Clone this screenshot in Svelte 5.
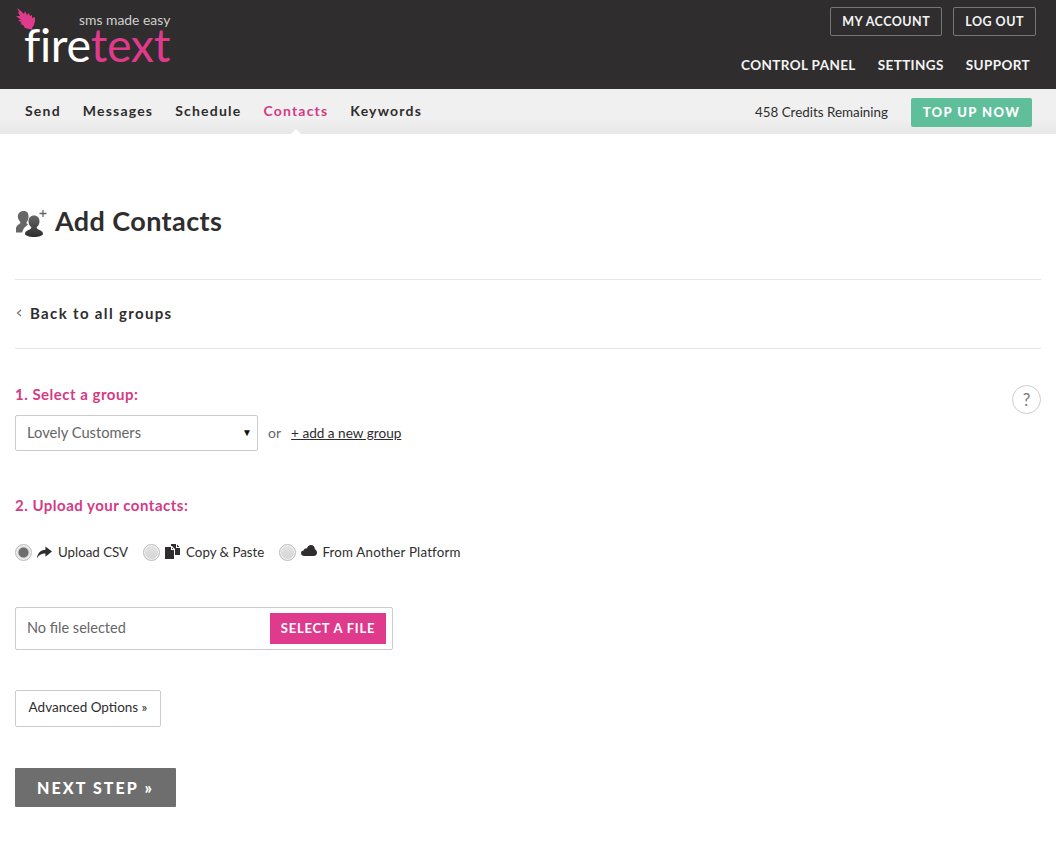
<script>
  const tabs = ['Send', 'Messages', 'Schedule', 'Contacts', 'Keywords'];
  const links = ['CONTROL PANEL', 'SETTINGS', 'SUPPORT'];
  let source = $state('csv');
  let group = $state('Lovely Customers');
</script>

<header class="top">
  <div class="logo">
    <svg class="flame" viewBox="0 0 20 23" width="20" height="23">
      <path d="M1 0 L5 3 L8 6 L9 3 L11 7 L13 5 L14 8 L16 7 L16 10 L19 9 L19 13 L18 17 L16 20 L17 22 L13 21 L9 20 L7 17 L4 16 L6 15 L2 12 L5 12 L0 8 L4 8 L2 4 L3 4 Z" fill="#df3a8b"/>
    </svg>
    <div class="tagline">sms made easy</div>
    <div class="wordmark">fire<span>text</span></div>
  </div>
  <div class="top-right">
    <div class="account">
      <a href="#account">MY ACCOUNT</a>
      <a href="#logout">LOG OUT</a>
    </div>
    <nav class="main-links">
      {#each links as link}
        <a href="#link">{link}</a>
      {/each}
    </nav>
  </div>
</header>

<div class="subnav">
  <nav class="tabs">
    {#each tabs as tab}
      <a href="#tab" class:active={tab === 'Contacts'}>{tab}</a>
    {/each}
  </nav>
  <div class="credits">
    <span>458 Credits Remaining</span>
    <a href="#topup" class="topup">TOP UP NOW</a>
  </div>
</div>

<main>
  <div class="title">
    <svg viewBox="0 0 32 28" width="32" height="28">
      <defs>
        <linearGradient id="person" x1="0" y1="0" x2="0" y2="1">
          <stop offset="0" stop-color="#666"/>
          <stop offset="1" stop-color="#2f2d2e"/>
        </linearGradient>
      </defs>
      <path d="M8.500 2c3.800 0 5.500 2.700 5 6.500-.3 2-1.200 4-2 5 0 1 .5 1.500 1.500 2l-4 3.500-2 4.500H1v-4c0-2.500 1.800-3.500 3.500-4.500 .7-.5 1-1 .8-2-1.300-1.500-2.500-3.500-2.500-5.500C2.800 4.500 5 2 8.500 2z" fill="#666"/>
      <path d="M19 6.500c3.500 0 5.500 2.500 5.500 6 0 2.300-1.200 4.300-2.700 5.600-.2 1.100.2 1.700 1.200 2.200 2.200 1 5 2 5 4.700 0 1.500-4 3-9 3s-9-1.500-9-3c0-2.700 2.800-3.700 5-4.700 1-.5 1.400-1.100 1.200-2.200-1.500-1.300-2.700-3.300-2.700-5.600 0-3.500 2-6 5.500-6z" fill="url(#person)"/>
      <path d="M28 1v7M24.500 4.500h7" stroke="#666" stroke-width="1.300" fill="none"/>
    </svg>
    <h1>Add Contacts</h1>
  </div>

  <div class="back">
    <svg viewBox="0 0 6 8" width="6" height="8"><path d="M5 1 1.500 4 5 7" fill="none" stroke="#777" stroke-width="1.200"/></svg>
    <a href="#back">Back to all groups</a>
  </div>

  <section class="form">
    <button class="help" type="button">?</button>

    <h2>1. Select a group:</h2>
    <div class="group-row">
      <div class="select">
        <select bind:value={group}>
          <option>Lovely Customers</option>
          <option>Staff</option>
        </select>
        <span class="caret">▼</span>
      </div>
      <span class="or">or</span>
      <a href="#new" class="add">+ add a new group</a>
    </div>

    <h2 class="second">2. Upload your contacts:</h2>
    <div class="sources">
      <label>
        <input type="radio" bind:group={source} value="csv" />
        <span class="radio"></span>
        <svg viewBox="0 0 16 13" width="15" height="13"><path d="M9 0l7 5.500L9 11V7.500C5.500 7.500 2.500 8.500 0 12.500 .5 7.500 3.500 3.800 9 3.500z" fill="#2f2d2e"/></svg>
        <span class="label-text">Upload CSV</span>
      </label>
      <label>
        <input type="radio" bind:group={source} value="paste" />
        <span class="radio"></span>
        <svg class="copy" viewBox="0 0 15 15" width="15" height="15"><path d="M0 3h6v3h3v9H0zM7 3.500 8.500 5H7zM6 0h5v4h4v7h-5V5L7 2H6zM12 .5 14.500 3H12z" fill="#2f2d2e"/></svg>
        <span class="label-text">Copy &amp; Paste</span>
      </label>
      <label class="platform">
        <input type="radio" bind:group={source} value="platform" />
        <span class="radio"></span>
        <svg class="cloud" viewBox="0 0 16 11" width="16" height="11"><path d="M3.500 11C1.300 11 0 9.800 0 8.200 0 6.700 1.200 5.700 2.600 5.600 3.200 3.800 4.500 3 6 3.200 6.800 1.200 8.300 0 10 0c2.300 0 3.800 1.800 3.900 4.300C15.200 5 16 6.200 16 7.700 16 9.700 14.500 11 12.500 11z" fill="#2f2d2e"/></svg>
        <span class="label-text">From Another Platform</span>
      </label>
    </div>

    <div class="file">
      <span>No file selected</span>
      <button type="button">SELECT A FILE</button>
    </div>

    <button class="advanced" type="button">Advanced Options »</button>

    <button class="next" type="button">NEXT STEP »</button>
  </section>
</main>

<style>
  :global(body) {
    margin: 0;
    background: #fff;
    color: #2f2d2e;
    font-family: Lato, 'Open Sans', sans-serif;
  }

  a {
    text-decoration: none;
    color: inherit;
  }

  .top {
    height: 89px;
    box-sizing: border-box;
    background: #2f2d2e;
    display: flex;
    justify-content: space-between;
    padding: 7px 20px 0 16px;
  }

  .logo {
    position: relative;
    width: 160px;
    height: 60px;
  }

  .flame {
    position: absolute;
    left: 0;
    top: 1px;
  }

  .tagline {
    position: absolute;
    left: 63px;
    top: 7px;
    font-size: 13.900px;
    line-height: 12px;
    font-weight: 400;
    color: #cfcfcf;
    white-space: nowrap;
  }

  .wordmark {
    position: absolute;
    left: 8px;
    top: 20px;
    font-size: 46.500px;
    line-height: 34px;
    font-weight: 400;
    letter-spacing: -0.3px;
    color: #fff;
    white-space: nowrap;
  }

  .wordmark span {
    color: #df3a8b;
  }

  .top-right {
    display: flex;
    flex-direction: column;
    align-items: flex-end;
  }

  .account {
    display: flex;
    gap: 11px;
  }

  .account a {
    border: 1px solid #777;
    border-radius: 2px;
    height: 27px;
    line-height: 27px;
    padding: 0 11px;
    font-size: 12.500px;
    font-weight: 700;
    letter-spacing: 0.5px;
    color: #f4f4f4;
  }

  .main-links {
    display: flex;
    gap: 22px;
    margin-top: 21px;
    padding-right: 6px;
    font-size: 13.500px;
    font-weight: 700;
    letter-spacing: 0.38px;
    color: #f4f4f4;
  }

  .subnav {
    height: 45px;
    background: linear-gradient(#f0f0f0 65%, #e8e8e8);
    display: flex;
    justify-content: space-between;
    align-items: center;
    padding: 0 24px 0 25px;
    position: relative;
  }

  .tabs {
    display: flex;
    gap: 22px;
    padding-bottom: 2px;
    font-size: 14px;
    font-weight: 700;
    letter-spacing: 1.2px;
  }

  .tabs a {
    position: relative;
  }

  .tabs a.active {
    color: #d53a85;
  }

  .tabs a.active::after {
    content: '';
    position: absolute;
    left: 50%;
    margin-left: -5px;
    bottom: -15px;
    border: 5px solid transparent;
    border-top: 0;
    border-bottom-color: #fff;
  }

  .credits {
    display: flex;
    align-items: center;
    gap: 23px;
    font-size: 13.400px;
  }

  .topup {
    width: 121px;
    height: 29px;
    margin: 1px 0 -1px;
    line-height: 29px;
    text-align: center;
    background: #5fbf9b;
    border-radius: 2px;
    color: #fff;
    font-weight: 900;
    letter-spacing: 1.4px;
    font-size: 13px;
  }

  main {
    padding: 0 15px;
  }

  .title {
    display: flex;
    align-items: center;
    gap: 8px;
    height: 146px;
    padding-top: 27px;
    box-sizing: border-box;
    border-bottom: 1px solid #e6e6e6;
  }

  .title svg {
    margin-top: 5px;
  }

  h1 {
    margin: 0;
    font-size: 27px;
    font-weight: 700;
    letter-spacing: 0.4px;
  }

  .back {
    height: 65px;
    padding: 0 0 3px 1px;
    display: flex;
    align-items: center;
    gap: 8px;
    border-bottom: 1px solid #e6e6e6;
    font-size: 15px;
    font-weight: 700;
    letter-spacing: 1.35px;
  }

  .form {
    position: relative;
    padding-top: 36px;
  }

  .help {
    position: absolute;
    right: 0;
    top: 36px;
    width: 29px;
    height: 29px;
    padding: 0;
    border: 1px solid #ccc;
    border-radius: 50%;
    background: #fff;
    color: #777;
    font-family: inherit;
    font-size: 17px;
  }

  h2 {
    margin: 0;
    font-size: 15px;
    line-height: 18px;
    font-weight: 700;
    letter-spacing: 0.5px;
    color: #d53a85;
  }

  .group-row {
    display: flex;
    align-items: center;
    margin-top: 12px;
    height: 36px;
    font-size: 13px;
  }

  .select {
    position: relative;
    width: 243px;
    height: 36px;
  }

  select {
    appearance: none;
    width: 100%;
    height: 100%;
    padding: 0 11px 2px;
    border: 1px solid #ccc;
    border-radius: 2px;
    background: #fff;
    color: #666;
    font-family: inherit;
    font-size: 14.700px;
  }

  .caret {
    position: absolute;
    right: 6px;
    top: 11px;
    font-size: 10px;
    color: #111;
    pointer-events: none;
  }

  .or {
    margin: 0 10px 1px 10px;
    color: #666;
    font-size: 14px;
  }

  .add {
    margin-bottom: 1px;
    text-decoration: underline;
    font-size: 13.600px;
  }

  .second {
    margin-top: 45px;
  }

  .sources {
    display: flex;
    align-items: center;
    gap: 15px;
    margin-top: 28px;
    height: 20px;
    font-size: 13.300px;
  }

  label {
    display: flex;
    align-items: center;
  }

  .copy {
    margin-top: -1px;
  }

  .cloud {
    margin-top: -3px;
  }

  input[type='radio'] {
    position: absolute;
    opacity: 0;
    width: 0;
    height: 0;
  }

  .radio {
    width: 15px;
    height: 15px;
    margin-right: 5px;
    border: 1px solid #bbb;
    border-radius: 50%;
    background: linear-gradient(#e4e4e4, #d4d4d4);
    box-shadow: inset 0 0 0 1px #f4f4f4;
  }

  input:checked + .radio {
    background: radial-gradient(circle, #6e6e6e 0 4.500px, #ddd 5.500px);
  }

  .label-text {
    margin-left: 6px;
  }

  .platform .label-text {
    margin-left: 5px;
    letter-spacing: 0.2px;
  }

  .file {
    display: flex;
    justify-content: space-between;
    align-items: center;
    box-sizing: border-box;
    width: 378px;
    height: 43px;
    margin-top: 45px;
    padding: 0 6px 0 11px;
    border: 1px solid #ccc;
    border-radius: 2px;
    color: #666;
    font-size: 14.500px;
  }

  .file span {
    margin-bottom: 2px;
  }

  .file button {
    width: 116px;
    height: 31px;
    padding: 0 0 2px;
    border: 0;
    background: #df3a8b;
    color: #fff;
    font-family: inherit;
    font-size: 13px;
    font-weight: 700;
    letter-spacing: 0.75px;
  }

  .advanced {
    display: block;
    width: 146px;
    height: 37px;
    margin-top: 40px;
    padding: 0 0 3px;
    border: 1px solid #ccc;
    border-radius: 2px;
    background: #fff;
    color: #2f2d2e;
    font-family: inherit;
    font-size: 13.500px;
  }

  .next {
    display: block;
    width: 161px;
    height: 39px;
    margin-top: 41px;
    padding: 0;
    border: 0;
    border-radius: 1px;
    background: #6e6e6e;
    color: #fff;
    font-family: inherit;
    font-size: 16px;
    font-weight: 900;
    letter-spacing: 2.1px;
  }
</style>
